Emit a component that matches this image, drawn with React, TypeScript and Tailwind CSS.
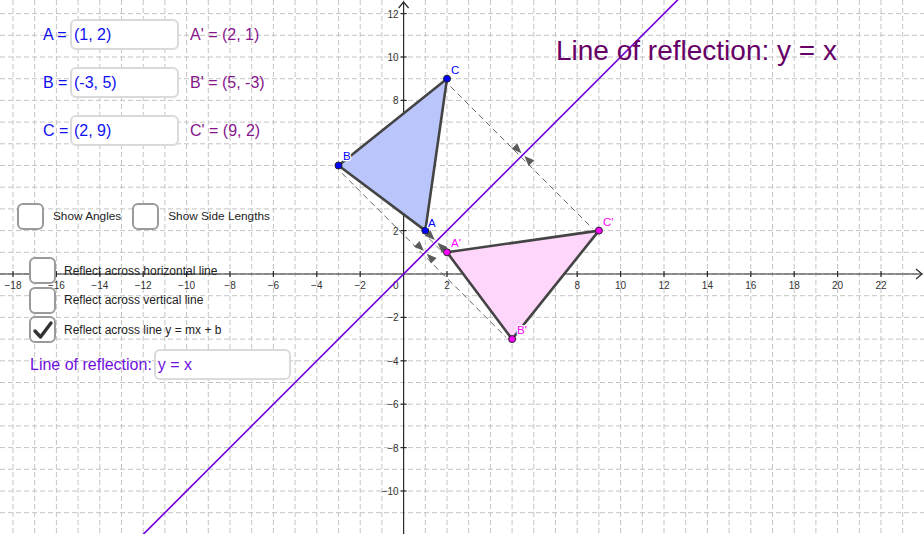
import React from 'react';

const OX = 403.6;
const OY = 274;
const S = 21.7;

const px = (x: number) => OX + S * x;
const py = (y: number) => OY - S * y;

type Pt = [number, number];

const A: Pt = [1, 2];
const B: Pt = [-3, 5];
const C: Pt = [2, 9];
const A2: Pt = [2, 1];
const B2: Pt = [5, -3];
const C2: Pt = [9, 2];

const range = (a: number, b: number) => Array.from({ length: b - a + 1 }, (_, i) => a + i);

const minus = (n: number) => (n < 0 ? `\u2212${Math.abs(n)}` : `${n}`);

const Grid = () => (
  <g stroke="#c4c4c4" strokeWidth={1} strokeDasharray="5 3">
    {range(-18, 23).map((i) => (
      <line key={`v${i}`} x1={px(i)} y1={0} x2={px(i)} y2={534} />
    ))}
    {range(-11, 12).map((i) => (
      <line key={`h${i}`} x1={0} y1={py(i)} x2={924} y2={py(i)} />
    ))}
  </g>
);

const Axes = () => (
  <g>
    <g stroke="#2a2a2a" strokeWidth={1.2} fill="none">
      <line x1={0} y1={OY} x2={922} y2={OY} />
      <polyline points={`916,${OY - 5} 922,${OY} 916,${OY + 5}`} />
      <line x1={OX} y1={2} x2={OX} y2={534} />
      <polyline points={`${OX - 5},8 ${OX},2 ${OX + 5},8`} />
      {range(-9, 11).filter((i) => i !== 0).map((i) => (
        <line key={`tx${i}`} x1={px(i * 2)} y1={OY - 3} x2={px(i * 2)} y2={OY + 3} />
      ))}
      {range(-5, 6).filter((i) => i !== 0).map((i) => (
        <line key={`ty${i}`} x1={OX - 3} y1={py(i * 2)} x2={OX + 3} y2={py(i * 2)} />
      ))}
    </g>
    <g fill="#333" fontSize={10} fontFamily="'Liberation Sans', Arial, sans-serif">
      {range(-9, 11).filter((i) => i !== 0).map((i) => (
        <text key={`lx${i}`} x={px(i * 2)} y={OY + 15} textAnchor="middle">
          {minus(i * 2)}
        </text>
      ))}
      {range(-5, 6).filter((i) => i !== 0).map((i) => (
        <text key={`ly${i}`} x={OX - 5} y={py(i * 2) + 4} textAnchor="end">
          {minus(i * 2)}
        </text>
      ))}
      <text x={OX - 5} y={OY + 15} textAnchor="end">0</text>
    </g>
  </g>
);

// dashed segment from P to its image, with two arrowheads pointing to the mirror line
const Connector = ({ p, q }: { p: Pt; q: Pt }) => {
  const x1 = px(p[0]);
  const y1 = py(p[1]);
  const x2 = px(q[0]);
  const y2 = py(q[1]);
  const len = Math.hypot(x2 - x1, y2 - y1);
  const ux = (x2 - x1) / len;
  const uy = (y2 - y1) / len;
  const mx = (x1 + x2) / 2;
  const my = (y1 + y2) / 2;
  // perpendicular offset
  const nx = -uy * 3;
  const ny = ux * 3;
  const head = (dir: number) => {
    const tipx = mx - dir * ux * 2;
    const tipy = my - dir * uy * 2;
    const bx = tipx - dir * ux * 10;
    const by = tipy - dir * uy * 10;
    return `${tipx},${tipy} ${bx - uy * 4},${by + ux * 4} ${bx + uy * 4},${by - ux * 4}`;
  };
  return (
    <g>
      <line
        x1={x1 + ux * 8 + nx}
        y1={y1 + uy * 8 + ny}
        x2={x2 - ux * 6 + nx}
        y2={y2 - uy * 6 + ny}
        stroke="#666"
        strokeWidth={1}
        strokeDasharray="6 4"
      />
      <polygon points={head(1)} fill="#5a5a5a" />
      <polygon points={head(-1)} fill="#5a5a5a" />
    </g>
  );
};

const poly = (pts: Pt[]) => pts.map((p) => `${px(p[0])},${py(p[1])}`).join(' ');

const Dot = ({ p, fill }: { p: Pt; fill: string }) => (
  <circle cx={px(p[0])} cy={py(p[1])} r={3.5} fill={fill} stroke="#222" strokeWidth={1} />
);

const Graph = () => (
  <svg width={924} height={534} className="absolute inset-0">
    <rect width={924} height={534} fill="#fff" />
    <Grid />
    <Axes />
    <polygon points={poly([A, B, C])} fill="#bac6fb" stroke="#444" strokeWidth={2.6} strokeLinejoin="round" />
    <polygon points={poly([A2, B2, C2])} fill="#ffd6fb" stroke="#444" strokeWidth={2.6} strokeLinejoin="round" />
    <Connector p={A} q={A2} />
    <Connector p={B} q={B2} />
    <Connector p={C} q={C2} />
    <line x1={px(-12.5)} y1={py(-12.5)} x2={px(13)} y2={py(13)} stroke="#7000dd" strokeWidth={1.6} />
    <Dot p={A} fill="#0000ff" />
    <Dot p={B} fill="#0000ff" />
    <Dot p={C} fill="#0000ff" />
    <Dot p={A2} fill="#ff00ff" />
    <Dot p={B2} fill="#ff00ff" />
    <Dot p={C2} fill="#ff00ff" />
    <g
      fontSize={11.5}
      fontFamily="'Liberation Sans', Arial, sans-serif"
      stroke="#fff"
      strokeWidth={2.5}
      strokeLinejoin="round"
      paintOrder="stroke"
    >
      <text x={428} y={227} fill="#0000ff">A</text>
      <text x={343} y={160} fill="#0000ff">B</text>
      <text x={451} y={74} fill="#0000ff">C</text>
      <text x={451} y={247} fill="#ff00ff">A'</text>
      <text x={517} y={334} fill="#ff00ff">B'</text>
      <text x={603} y={226} fill="#ff00ff">C'</text>
    </g>
  </svg>
);

const Box = ({ checked = false }: { checked?: boolean }) => (
  <div className="w-[27px] h-[27px] shrink-0 rounded-md border-2 border-[#9a9a9a] bg-white flex items-center justify-center">
    {checked && (
      <svg width={22} height={22} viewBox="0 0 22 22">
        <path d="M3 12 L8.5 18 L19 4" fill="none" stroke="#333" strokeWidth={3.4} strokeLinecap="round" strokeLinejoin="round" />
      </svg>
    )}
  </div>
);

const points = [
  { name: 'A', value: '(1, 2)', image: "A' = (2, 1)" },
  { name: 'B', value: '(-3, 5)', image: "B' = (5, -3)" },
  { name: 'C', value: '(2, 9)', image: "C' = (9, 2)" },
];

const reflectOptions = [
  { label: 'Reflect across horizontal line', checked: false },
  { label: 'Reflect across vertical line', checked: false },
  { label: 'Reflect across line y = mx + b', checked: true },
];

export default function App() {
  return (
    <div className="relative w-[924px] h-[534px] overflow-hidden bg-white font-['Liberation_Sans',Arial,sans-serif]">
      <Graph />

      <div className="absolute left-[43px] top-[19px] flex flex-col gap-[17px]">
        {points.map((p) => (
          <div key={p.name} className="flex items-center h-[31px]">
            <span className="w-[27px] text-[16px] text-[#1010f0] whitespace-nowrap">{p.name} =</span>
            <div className="w-[109px] h-[31px] rounded-md border-2 border-[#dadada] bg-white flex items-center pl-[2px] text-[16px] text-[#1010f0]">
              {p.value}
            </div>
            <span className="ml-[11px] text-[16px] text-[#86158a] whitespace-nowrap">{p.image}</span>
          </div>
        ))}
      </div>

      <div className="absolute left-[556px] top-[37px] text-[28px] leading-none text-[#660066] whitespace-nowrap">
        Line of reflection: y = x
      </div>

      <div className="absolute left-[17px] top-[203px] flex items-center">
        <Box />
        <span className="ml-[9px] text-[11.8px] text-[#222]">Show Angles</span>
        <div className="ml-[11px]">
          <Box />
        </div>
        <span className="ml-[9px] text-[11.8px] text-[#222]">Show Side Lengths</span>
      </div>

      <div className="absolute left-[29px] top-[257px] flex flex-col gap-[2.5px]">
        {reflectOptions.map((o) => (
          <div key={o.label} className="flex items-center">
            <Box checked={o.checked} />
            <span className="ml-[8px] text-[12px] text-[#222] whitespace-nowrap">{o.label}</span>
          </div>
        ))}
      </div>

      <div className="absolute left-[30px] top-[349px] flex items-center">
        <span className="text-[16px] text-[#7010e0] whitespace-nowrap">Line of reflection:</span>
        <div className="ml-[2px] w-[137px] h-[31px] rounded-md border-2 border-[#dadada] bg-white flex items-center pl-[2px] text-[16px] text-[#7010e0]">
          y = x
        </div>
      </div>
    </div>
  );
}
